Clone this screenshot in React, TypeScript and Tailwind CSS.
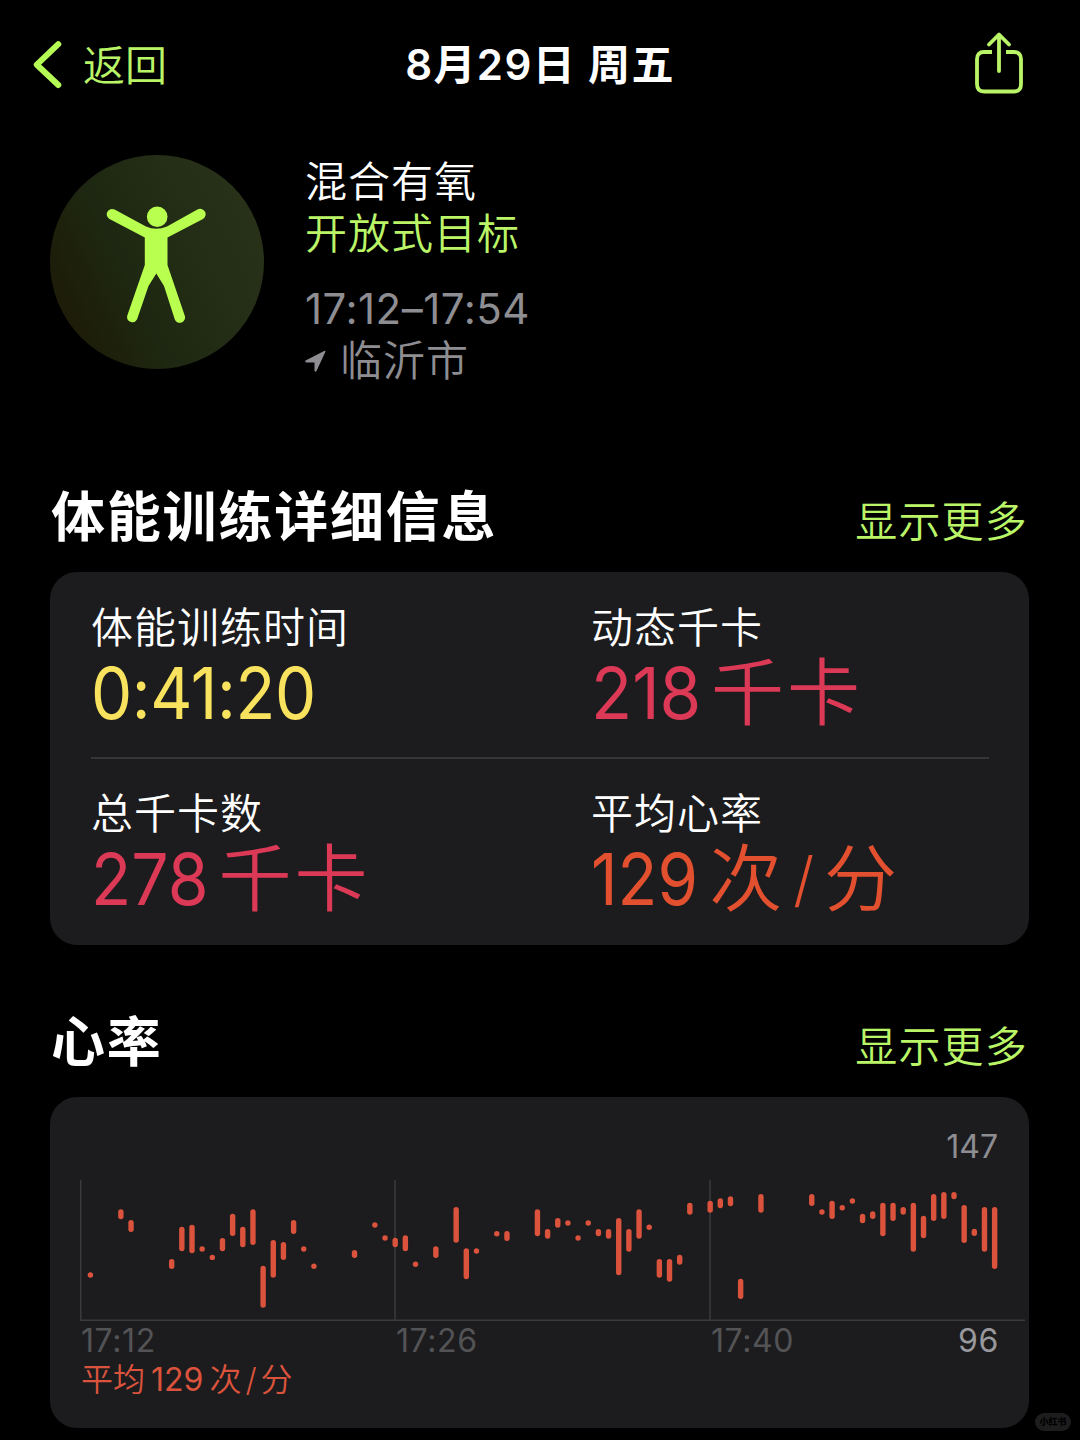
import { ReactNode } from "react";

// Heart rate sample: slot on the time axis, top and bottom inside the plot
type SAMPLE = [number, number, number];

type StatProps = {
  label: string;
  color: string;
  children: ReactNode;
}

type SectionTitleProps = {
  title: string;
}

const FIRST_X = 10.4;
const STEP_X = 10.16;
const BAR_WIDTH = 5.4;

const samples: SAMPLE[] = [
  [0, 92.3, 97.7], [3, 29.3, 39.3], [4, 40, 52], [8, 79, 89], [9, 46.7, 71.3],
  [10, 44.7, 73.3], [11, 66.3, 71.7], [12, 74.7, 80.1], [13, 58, 71.3], [14, 33.7, 56],
  [15, 46.7, 67.3], [16, 29.3, 65], [17, 85.7, 127.7], [18, 60, 97.7], [19, 62, 80],
  [20, 40, 54], [21, 66.3, 71.7], [22, 83.6, 89], [26, 70, 78], [28, 42.3, 47.7],
  [29, 55.3, 60.7], [30, 57.7, 67.3], [31, 55.3, 71.3], [32, 81.6, 87], [34, 66.3, 78],
  [36, 27, 62.7], [37, 68.3, 99.3], [38, 68.3, 73.7], [40, 51, 56.4], [41, 51, 61],
  [44, 29.3, 56.3], [45, 49, 58.7], [46, 38, 47.7], [47, 40.3, 45.7], [48, 55.3, 60.7],
  [49, 40.3, 45.7], [50, 49, 56.3], [51, 49, 58.7], [52, 38, 95.3], [53, 49, 71.7],
  [54, 29.3, 58.7], [55, 44.6, 50], [56, 79, 97.7], [57, 79, 101.7], [58, 74.7, 84.7],
  [59, 22.7, 34.7], [61, 20.7, 32.7], [62, 18.3, 28.3], [63, 16.3, 26.3], [64, 98.7, 119],
  [66, 14, 32.7], [71, 14, 26], [72, 29.3, 34.7], [73, 20.7, 39], [74, 25, 30.4],
  [75, 18.3, 23.7], [76, 33.7, 43.3], [77, 31.3, 39], [78, 22.7, 56.3], [79, 22.7, 41],
  [80, 27, 34.7], [81, 22.7, 71.7], [82, 35.7, 58.3], [83, 14, 41], [84, 12, 39],
  [85, 12, 19.3], [86, 25, 63], [87, 48.7, 56], [88, 27, 71.7], [89, 27, 89],
];

const SectionTitle = ({title}: SectionTitleProps) => (
  <div className="flex h-[65px] items-start justify-between pl-[51px] pr-[52px] pt-[1px] whitespace-nowrap">
    <h2 className="text-[54px] leading-[60px] tracking-[1.8px] font-bold text-white">{title}</h2>
    <button className="mt-[4px] text-[42px] leading-[60px] tracking-[1.2px] text-[#baf568]">显示更多</button>
  </div>
)

const Stat = ({label, color, children}: StatProps) => (
  <div className="whitespace-nowrap">
    <p className="text-[42px] leading-[50px] tracking-[1px] text-white">{label}</p>
    <p className={`flex h-[80px] items-center text-[71px] leading-[80px] ${color}`}>{children}</p>
  </div>
)

const HeartRateChart = () => (
  <svg width="946" height="142" viewBox="0 0 946 142" className="block">
    <path d="M.7 0V140M315 0V140M630 0V140M0 140.2H945" stroke="#3a3a3c" strokeWidth="1.5" fill="none" />
    {samples.map(([slot, top, bottom]) => (
      <rect
        key={slot}
        x={FIRST_X + slot * STEP_X - BAR_WIDTH / 2}
        y={top}
        width={BAR_WIDTH}
        height={bottom - top}
        rx={BAR_WIDTH / 2}
        fill="#db533c"
      />
    ))}
  </svg>
)

const App = () => {
  return (
    <div className="relative h-[1440px] w-[1080px] overflow-hidden bg-black font-['Inter','Noto_Sans_CJK_SC',sans-serif] font-[350]">
      {/* ---------- Nav bar ---------- */}
      <header className="grid h-[130px] grid-cols-[1fr_auto_1fr] items-center whitespace-nowrap">
        <div className="flex items-center pl-[32px] text-[#baf568]">
          <svg width="32" height="50" viewBox="0 0 32 50" fill="none">
            <path d="M26.3 4.2L4.8 24.7L26.3 45" stroke="#b5f955" strokeWidth="6" strokeLinecap="round" strokeLinejoin="round" />
          </svg>
          <span className="ml-[19px] pt-[2px] text-[42px] leading-[60px]">返回</span>
        </div>
        <h1 className="text-[42px] leading-[60px] tracking-[1.4px] font-semibold text-white">8月29日 周五</h1>
        <div className="flex justify-end pr-[56px] pb-[4px]">
          <svg width="50" height="62" viewBox="0 0 50 62" fill="none" stroke="#baf568" strokeWidth="3.8" strokeLinecap="round" strokeLinejoin="round">
            <path d="M18 20H10Q3 20 3 27V52Q3 59.500 10 59.500H40Q47 59.500 47 52V27Q47 20 40 20H32" strokeLinecap="butt" />
            <path d="M25 39V3M15 12.500L25 2.500L35 12.500" />
          </svg>
        </div>
      </header>

      {/* ---------- Workout summary ---------- */}
      <section className="flex h-[357px] pl-[50px] pt-[25px]">
        <div className="flex h-[214px] w-[214px] items-center justify-center rounded-full bg-linear-[65deg,#1d1c08_12%,#1e2711_38%,#293219_90%]">
          <svg width="214" height="214" viewBox="0 0 214 214">
            <g fill="#b9ff4f">
              <circle cx="107.2" cy="61.700" r="10.300" />
              <path d="M64.600 54.600L96 71.500Q106 76 117 71.500L147.400 54.600A5.300 5.300 0 0 1 153 63.900L117.500 82.500V110L134.700 160.500A5.300 5.300 0 0 1 124.800 164.500L114 131L106.300 118.500L98.500 131L87 164.500A5.300 5.300 0 0 1 77.300 160.500L94.800 110V82.500L59.500 63.900A5.300 5.300 0 0 1 64.600 54.600Z" />
            </g>
          </svg>
        </div>
        <div className="ml-[41px] pt-[1px] whitespace-nowrap text-[42px] leading-[52px] tracking-[1px]">
          <p className="text-white">混合有氧</p>
          <p className="text-[#baf568]">开放式目标</p>
          <p className="mt-[23px] font-normal tracking-[0.5px] text-[#8d8d92]">17:12–17:54</p>
          <div className="flex items-center text-[#8d8d92]">
            <svg width="21" height="23" viewBox="0 0 21 23">
              <path d="M.6 10.600L19.600 .7Q20.600 .6 20.400 1.800L11.500 21Q10.600 22.400 9.500 21V12.600H1.200Q-.4 11.800 .6 10.600Z" fill="#8d8d92" />
            </svg>
            <span className="ml-[14px]">临沂市</span>
          </div>
        </div>
      </section>

      {/* ---------- Workout details ---------- */}
      <section>
        <SectionTitle title="体能训练详细信息" />
        <div className="mt-[20px] ml-[50px] h-[373px] w-[979px] rounded-[27px] bg-[#1c1c1e] px-[41px] pt-[31px]">
          <div className="grid h-[154px] grid-cols-[500px_1fr]">
            <Stat label="体能训练时间" color="text-[#f9e35e]">
              <span className="origin-left scale-x-[0.92] font-normal tracking-[-0.4px]">0:41:20</span>
            </Stat>
            <Stat label="动态千卡" color="text-[#db3956]">
              <span className="origin-left scale-x-[0.95] font-normal">218</span>
              <span className="ml-[4px] text-[73px] tracking-[3px]">千卡</span>
            </Stat>
          </div>
          <div className="h-[1.5px] w-[898px] bg-[#363638]" />
          <div className="grid grid-cols-[500px_1fr] pt-[30px]">
            <Stat label="总千卡数" color="text-[#db3956]">
              <span className="origin-left scale-x-[0.93] font-normal">278</span>
              <span className="ml-[1px] text-[73px] tracking-[3px]">千卡</span>
            </Stat>
            <Stat label="平均心率" color="text-[#e2502f]">
              <span className="origin-left scale-x-[0.92] font-normal">129</span>
              <span className="ml-[2px] text-[73px]">次</span>
              <span className="ml-[11px] mr-[10px] text-[60px]">/</span>
              <span className="text-[73px]">分</span>
            </Stat>
          </div>
        </div>
      </section>

      {/* ---------- Heart rate ---------- */}
      <section className="pt-[67px]">
        <SectionTitle title="心率" />
        <div className="mt-[20px] ml-[50px] h-[331px] w-[979px] rounded-[27px] bg-[#1c1c1e] pl-[30px] pt-[30px] text-[32px] leading-[40px]">
          <p className="pr-[31px] text-right font-normal text-[#8d8d92]">147</p>
          <div className="mt-[13px]">
            <HeartRateChart />
          </div>
          <div className="flex h-[38px] items-center pl-[1px] font-normal tracking-[0.6px] text-[#535356]">
            <span className="w-[315px]">17:12</span>
            <span className="w-[315px]">17:26</span>
            <span>17:40</span>
            <span className="ml-auto pr-[30px] text-[#98989d]">96</span>
          </div>
          <p className="flex pl-[1px] text-[#db533c]">
            <span>平均</span>
            <span className="ml-[6px] font-normal">129</span>
            <span className="ml-[6px]">次</span>
            <span className="mx-[4px]">/</span>
            <span>分</span>
          </p>
        </div>
      </section>

      {/* ---------- Watermark ---------- */}
      <div className="absolute left-[1035px] top-[1413px] flex h-[18px] w-[36px] items-center justify-center rounded-full bg-[#1d1d1d] text-[9px] font-black text-black">小红书</div>
    </div>
  );
}

export default App;
